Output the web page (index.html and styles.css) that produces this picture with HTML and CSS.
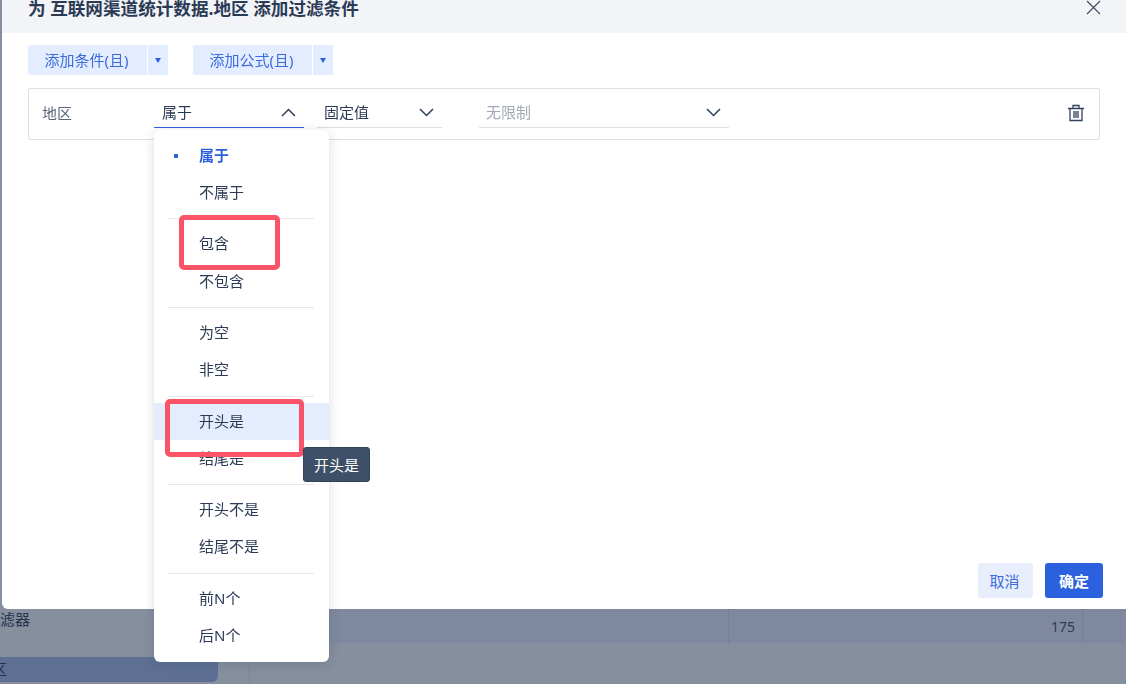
FILE: index.html
```html
<!DOCTYPE html>
<html lang="zh-CN">
<head>
    <meta charset="UTF-8">
    <title>添加过滤条件</title>
    <link rel="stylesheet" href="styles.css">
</head>
<body>
    <div class="page">
        <div class="sidebar">
            <div class="side-item">过滤器</div>
            <div class="side-item side-active">地区</div>
        </div>
        <div class="table">
            <div class="table-row">
                <div class="cell cell-wide"></div>
                <div class="cell cell-num">175</div>
                <div class="cell cell-end"></div>
            </div>
        </div>
    </div>

    <div class="modal">
        <div class="modal-header">
            <h1 class="modal-title">为 互联网渠道统计数据.地区 添加过滤条件</h1>
            <svg class="close-icon" width="15" height="15" viewBox="0 0 15 15">
                <path d="M1 1L14 14M14 1L1 14" fill="none" stroke="#3e4f68" stroke-width="1.2"/>
            </svg>
        </div>
        <div class="modal-body">
            <div class="toolbar">
                <div class="split-btn">
                    <span class="split-main">添加条件(且)</span>
                    <span class="split-arrow"><i class="triangle"></i></span>
                </div>
                <div class="split-btn">
                    <span class="split-main">添加公式(且)</span>
                    <span class="split-arrow"><i class="triangle"></i></span>
                </div>
            </div>
            <div class="filter-row">
                <span class="filter-label">地区</span>
                <div class="filter-select select-op">
                    <span class="select-text">属于</span>
                    <svg class="chevron" width="15" height="9" viewBox="0 0 15 9">
                        <path d="M1 8L7.5 1.5L14 8" fill="none" stroke="#2f3f5a" stroke-width="1.5"/>
                    </svg>
                    <div class="menu">
                        <div class="menu-item menu-selected">属于</div>
                        <div class="menu-item">不属于</div>
                        <div class="menu-divider"></div>
                        <div class="menu-item">包含</div>
                        <div class="menu-item">不包含</div>
                        <div class="menu-divider"></div>
                        <div class="menu-item">为空</div>
                        <div class="menu-item">非空</div>
                        <div class="menu-divider"></div>
                        <div class="menu-item menu-hover">开头是<span class="tooltip">开头是</span></div>
                        <div class="menu-item">结尾是</div>
                        <div class="menu-divider"></div>
                        <div class="menu-item">开头不是</div>
                        <div class="menu-item">结尾不是</div>
                        <div class="menu-divider"></div>
                        <div class="menu-item">前N个</div>
                        <div class="menu-item">后N个</div>
                        <div class="mark mark-one"></div>
                        <div class="mark mark-two"></div>
                    </div>
                </div>
                <div class="filter-select select-type">
                    <span class="select-text">固定值</span>
                    <svg class="chevron" width="15" height="9" viewBox="0 0 15 9">
                        <path d="M1 1L7.5 7.5L14 1" fill="none" stroke="#2f3f5a" stroke-width="1.5"/>
                    </svg>
                </div>
                <div class="filter-select select-value">
                    <span class="select-text placeholder">无限制</span>
                    <svg class="chevron" width="15" height="9" viewBox="0 0 15 9">
                        <path d="M1 1L7.5 7.5L14 1" fill="none" stroke="#2f3f5a" stroke-width="1.5"/>
                    </svg>
                </div>
                <svg class="trash-icon" width="18" height="18" viewBox="0 0 18 18">
                    <path d="M1 4.5H17M6 4.5V1.5H12V4.5M3 4.5V16.5H15V4.5M7 7V14M9 7V14M11 7V14" fill="none" stroke="#33435e" stroke-width="1.3"/>
                </svg>
            </div>
        </div>
        <div class="modal-footer">
            <button class="btn btn-cancel">取消</button>
            <button class="btn btn-ok">确定</button>
        </div>
    </div>
</body>
</html>
```

FILE: styles.css
```css
html, body {
    height: 100%;
}
body {
    margin: 0;
    overflow: hidden;
    font-family: "Noto Sans", "Noto Sans CJK SC", sans-serif;
    font-size: 15px;
    color: #2b3a55;
    background-color: #858f9e;
}
.page {
    display: flex;
    height: 100%;
}
.sidebar {
    width: 249px;
    border-right: 1px solid #7b8596;
    display: flex;
    flex-direction: column;
    justify-content: flex-end;
    padding-bottom: 2px;
    box-sizing: content-box;
    overflow: hidden;
}
.side-item {
    width: 218px;
    height: 25px;
    line-height: 25px;
    white-space: nowrap;
    color: #24324d;
}
.sidebar .side-item:first-child {
    height: 48px;
    line-height: 20px;
    text-indent: -15px;
}
.side-active {
    background-color: #5d7094;
    border-bottom-right-radius: 6px;
    text-indent: -23px;
}
.table {
    flex: 1;
    padding-top: 609px;
}
.table-row {
    display: flex;
    height: 34px;
    background-color: #7e899f;
}
.cell-wide {
    width: 478px;
    border-right: 1px solid #747f95;
}
.cell-num {
    width: 346px;
    padding-right: 7px;
    line-height: 36px;
    font-size: 14px;
    text-align: right;
    color: #2f3b55;
    border-right: 1px solid #747f95;
}
.cell-end {
    flex: 1;
}

.modal {
    position: fixed;
    top: -16px;
    left: 2px;
    right: 0;
    height: 625px;
    display: flex;
    flex-direction: column;
    background-color: #ffffff;
    border-bottom-left-radius: 6px;
}
.modal-header {
    display: flex;
    align-items: center;
    justify-content: space-between;
    height: 49px;
    padding: 0 25px 0 26px;
    background-color: #f2f4f8;
}
.modal-title {
    margin: -2px 0 0;
    font-size: 17.6px;
    font-weight: 700;
    color: #2b3a55;
}
.close-icon {
    margin-top: -2px;
}
.modal-body {
    flex: 1;
    padding: 12px 26px 0;
}
.toolbar {
    display: flex;
    gap: 25px;
}
.split-btn {
    display: flex;
    gap: 1px;
    height: 30px;
    line-height: 30px;
    color: #3b6bdc;
}
.split-main {
    width: 117px;
    padding-right: 2px;
    text-align: center;
    background-color: #e3edff;
    border-radius: 3px 0 0 3px;
}
.split-arrow {
    display: flex;
    align-items: center;
    justify-content: center;
    width: 20px;
    background-color: #e3edff;
}
.triangle {
    width: 0;
    height: 0;
    border-left: 3.5px solid transparent;
    border-right: 3.5px solid transparent;
    border-top: 5px solid #2b60de;
}
.filter-row {
    display: flex;
    align-items: flex-start;
    height: 52px;
    box-sizing: border-box;
    margin-top: 13px;
    padding: 9px 13px;
    border: 1px solid #dcdfe6;
    border-radius: 2px;
}
.filter-label {
    width: 112px;
    line-height: 30px;
    color: #5b6779;
}
.filter-select {
    position: relative;
    display: flex;
    align-items: center;
    justify-content: space-between;
    height: 30px;
    box-sizing: border-box;
    padding: 0 8px 0 7px;
    border-bottom: 1px solid #dcdfe6;
}
.select-text {
    margin-top: -2px;
}
.select-op {
    width: 150px;
    padding-left: 8px;
    border-bottom-color: #2b60de;
}
.select-type {
    width: 125px;
    margin-left: 13px;
}
.select-value {
    width: 250px;
    margin-left: 37px;
}
.placeholder {
    color: #a2a9b5;
}
.trash-icon {
    margin-left: auto;
    margin-top: 6px;
    margin-right: 1px;
}

.menu {
    position: absolute;
    top: 32px;
    left: 0;
    z-index: 2;
    width: 175px;
    height: 532px;
    box-sizing: border-box;
    padding-top: 6.8px;
    background-color: #ffffff;
    border-radius: 6px;
    box-shadow: 0 2px 12px rgba(30, 40, 70, 0.16);
}
.menu-item {
    position: relative;
    height: 37.3px;
    line-height: 37px;
    padding-left: 45px;
}
.menu-selected {
    font-weight: 700;
    color: #2b60de;
}
.menu-selected::before {
    content: "";
    position: absolute;
    left: 20px;
    top: 17px;
    width: 4px;
    height: 4px;
    background-color: #2b60de;
}
.menu-hover {
    background-color: #e3edfd;
}
.menu-divider {
    height: 1px;
    margin: 7px 15px 6px 14px;
    background-color: #e6e8ec;
}
.tooltip {
    position: absolute;
    top: 44px;
    left: 149px;
    z-index: 3;
    width: 67px;
    height: 35px;
    line-height: 34px;
    box-sizing: border-box;
    text-align: center;
    color: #ffffff;
    background-color: #3e5068;
    border: 1px solid #33435a;
    border-radius: 3px;
}
.mark {
    position: absolute;
    box-sizing: border-box;
    border: 5px solid #fb5468;
    border-radius: 5px;
}
.mark-one {
    top: 85px;
    left: 25px;
    width: 101px;
    height: 55px;
}
.mark-two {
    top: 269px;
    left: 11px;
    width: 139px;
    height: 58px;
}

.modal-footer {
    display: flex;
    justify-content: flex-end;
    gap: 12px;
    padding: 0 23px 11px 0;
}
.btn {
    height: 35px;
    padding: 0;
    border: none;
    border-radius: 3px;
    font-family: inherit;
    font-size: 15px;
}
.btn-cancel {
    width: 55px;
    padding-right: 2px;
    color: #3b6bdc;
    background-color: #e8eefc;
}
.btn-ok {
    width: 58px;
    font-weight: 700;
    color: #ffffff;
    background-color: #2b60de;
}
```
